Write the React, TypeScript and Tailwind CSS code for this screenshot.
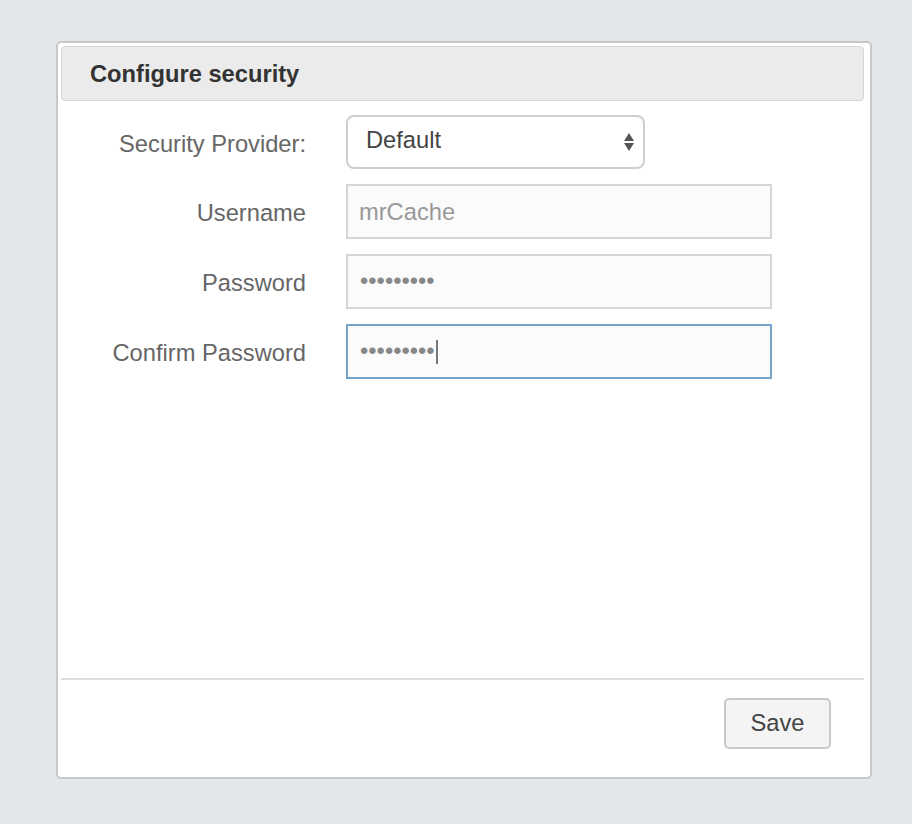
import React from "react";

const font = { fontFamily: '"Liberation Sans", Arial, sans-serif' };

function Arrows() {
    return (
        <svg width="12" height="24" viewBox="0 0 12 24" className="text-[#555]">
            <path d="M6 3 L11 11 L1 11 Z" fill="currentColor" />
            <path d="M1 13 L11 13 L6 21 Z" fill="currentColor" />
        </svg>
    );
}

const Dots = () => <span className="text-[#888]">•••••••••</span>;

export default function App() {
    return (
        <div className="min-h-[824px] w-full bg-[#e4e7ea] pt-[41px] pl-[56px]" style={font}>
            <div className="w-[816px] h-[738px] bg-white border-2 border-[#c8c8c8] rounded-[5px] flex flex-col">
                <div className="mt-[3px] ml-[3px] mr-[6px] h-[55px] bg-[#ebebeb] border border-[#d6d6d6] rounded-[4px] flex items-center pl-[28px] pt-[2px]">
                    <h1 className="text-[23.7px] font-bold text-[#333]">Configure security</h1>
                </div>

                <div className="mt-[14px] grid grid-cols-[248px_1fr] gap-x-[40px] gap-y-[15px] items-center text-[23.7px]">
                    <label className="text-right text-[#666] pt-[5px]">Security Provider:</label>
                    <div className="w-[299px] h-[54px] border-2 border-[#cfcfcf] rounded-[8px] bg-white flex items-center justify-between pl-[18px] pr-[8px] text-[#444]">
                        <span className="-mt-[2px]">Default</span>
                        <Arrows />
                    </div>

                    <label className="text-right text-[#666] pt-[4px]">Username</label>
                    <div className="w-[426px] h-[55px] border-2 border-[#d6d6d6] bg-[#fbfbfb] flex items-center pl-[11px] pt-[2px] text-[#999]">
                        mrCache
                    </div>

                    <label className="text-right text-[#666] pt-[5px]">Password</label>
                    <div className="w-[426px] h-[55px] border-2 border-[#d6d6d6] bg-[#fbfbfb] flex items-center pl-[12px]">
                        <Dots />
                    </div>

                    <label className="text-right text-[#666] pt-[5px]">Confirm Password</label>
                    <div className="w-[426px] h-[55px] border-2 border-[#74a4cc] bg-[#fbfbfb] flex items-center pl-[12px]">
                        <Dots />
                        <span className="inline-block w-[2px] h-[24px] bg-[#777] ml-[1px]" />
                    </div>
                </div>

                <div className="flex-1" />

                <div className="ml-[3px] mr-[6px] border-t-2 border-[#dddddd] pt-[18px] pb-[28px] flex justify-end pr-[33px]">
                    <button className="w-[107px] h-[51px] bg-[#f4f4f4] border-2 border-[#c8c8c8] rounded-[5px] text-[23.7px] text-[#444]">
                        Save
                    </button>
                </div>
            </div>
        </div>
    );
}
